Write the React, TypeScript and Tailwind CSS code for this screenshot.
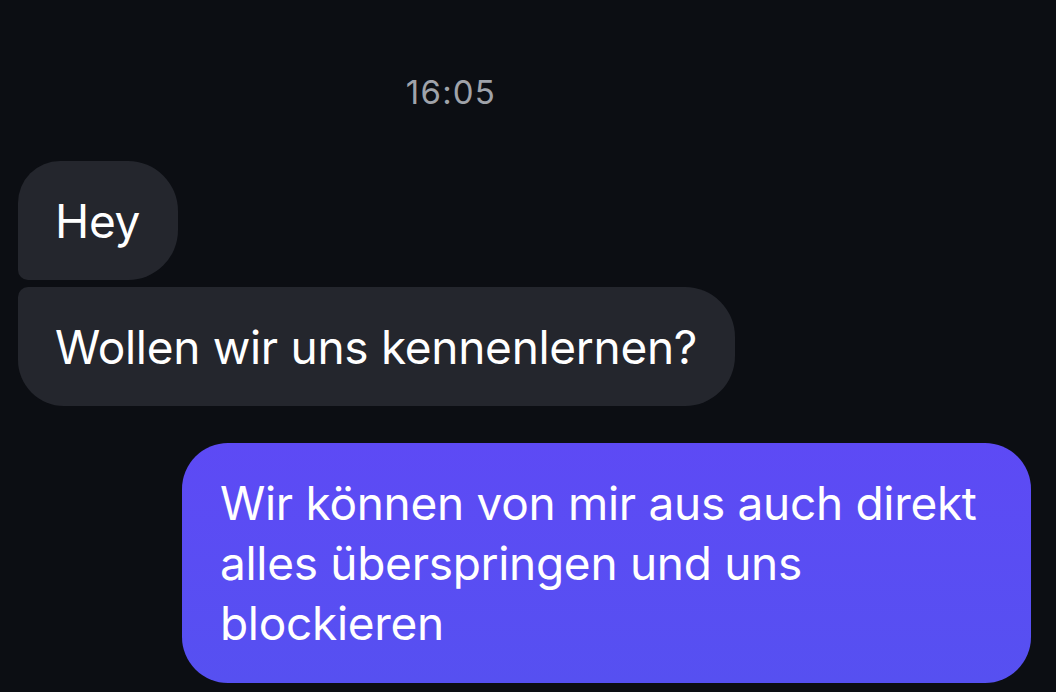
export default function App() {
  return (
    <div className="w-[1056px] h-[692px] overflow-hidden bg-[#0c0e13] font-['Inter',sans-serif] text-white">
      <div className="w-[902px] pt-[72px] flex justify-center">
        <span className="text-[33px] leading-[40px] tracking-[1.2px] text-[#a0a3aa]">16:05</span>
      </div>

      <div className="mt-[49px] pl-[18px] flex flex-col items-start gap-[7px]">
        <div className="bg-[#24262d] rounded-tl-[42px] rounded-tr-[50px] rounded-br-[50px] rounded-bl-[10px] pl-[37px] pr-[38px] pt-[30px] pb-[29px] text-[46px] leading-[60px] tracking-[-0.3px]">
          Hey
        </div>
        <div className="bg-[#24262d] rounded-tl-[10px] rounded-tr-[50px] rounded-br-[50px] rounded-bl-[46px] pl-[37px] pr-[38px] pt-[30px] pb-[29px] text-[46px] leading-[60px] tracking-[-0.3px]">
          Wollen wir uns kennenlernen?
        </div>
      </div>

      <div className="mt-[37px] pr-[25px] flex justify-end">
        <div className="w-[849px] bg-gradient-to-b from-[#5d4af5] to-[#5650f1] rounded-[46px] pl-[38px] pr-[30px] pt-[30px] pb-[30px] text-[46px] leading-[60px] tracking-[-0.3px]">
          Wir können von mir aus auch direkt alles überspringen und uns blockieren
        </div>
      </div>
    </div>
  );
}
